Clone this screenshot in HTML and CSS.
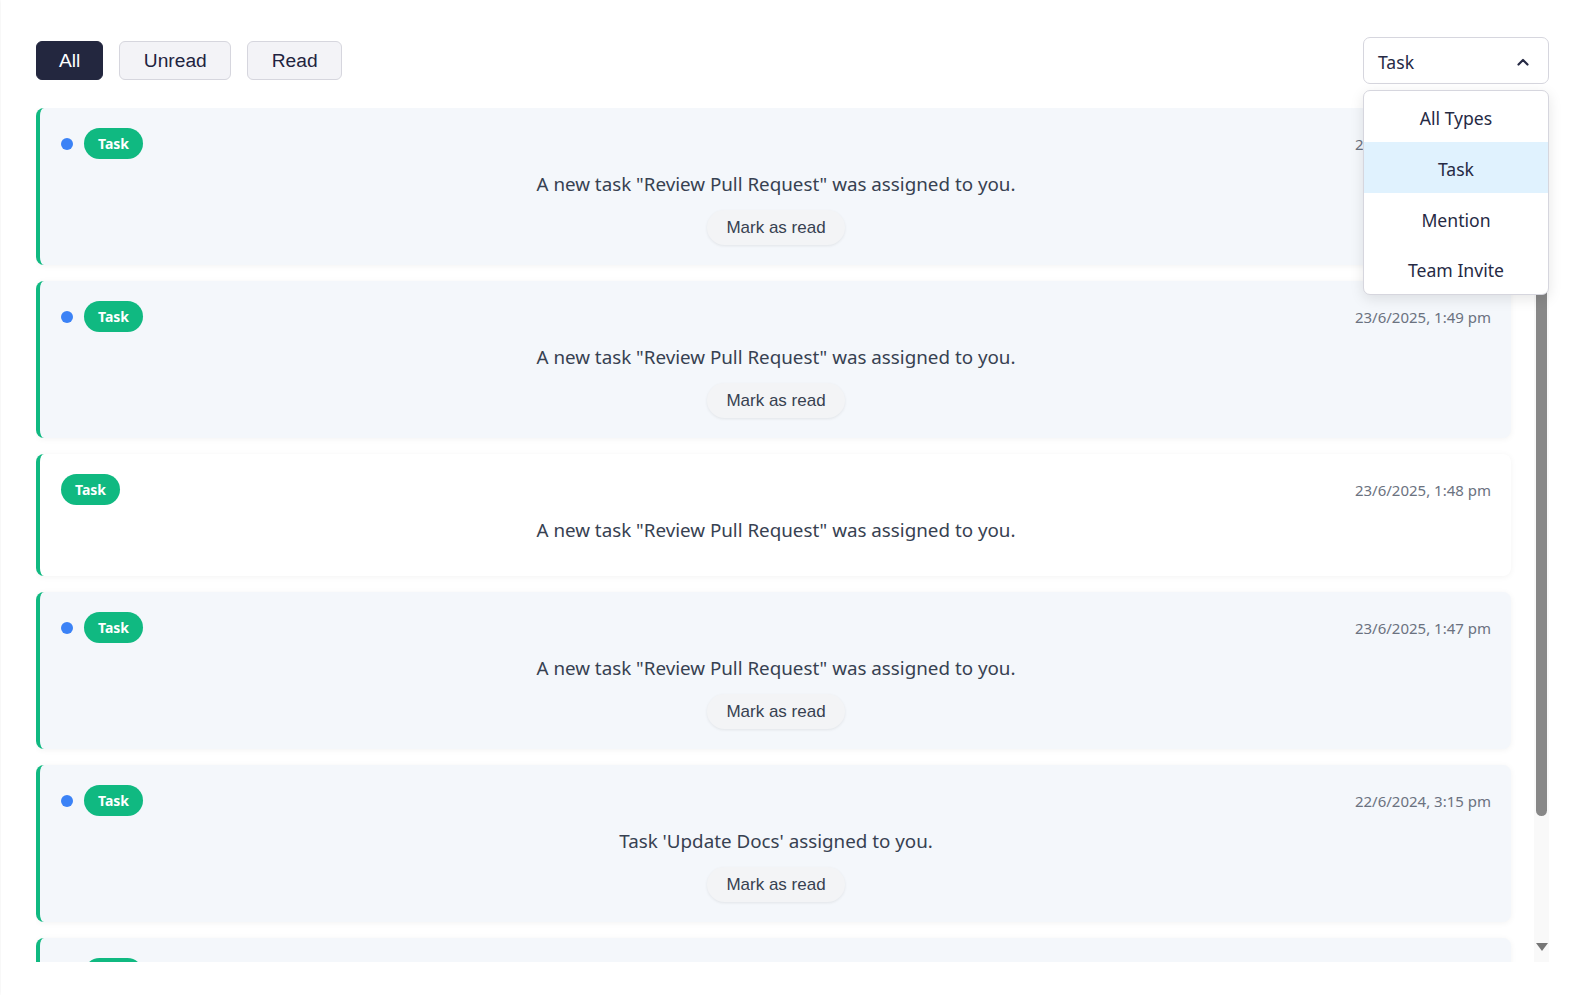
FILE: index.html
```html
<!DOCTYPE html>
<html lang="en">
<head>
<meta charset="utf-8">
<title>Notifications</title>
<link rel="stylesheet" href="styles.css">
</head>
<body>
<div class="page">
  <div class="toolbar">
    <div class="filters">
      <button class="filter-btn active">All</button>
      <button class="filter-btn">Unread</button>
      <button class="filter-btn">Read</button>
    </div>
    <div class="type-select">
      <div class="select-box">
        <span>Task</span>
        <svg class="chevron" width="12" height="8" viewBox="0 0 12 8"><path d="M1.5 6.5 L6 2 L10.5 6.5" fill="none" stroke="#262a44" stroke-width="2.2" stroke-linecap="round" stroke-linejoin="round"/></svg>
      </div>
      <ul class="dropdown">
        <li class="option">All Types</li>
        <li class="option selected">Task</li>
        <li class="option">Mention</li>
        <li class="option">Team Invite</li>
      </ul>
    </div>
  </div>

  <div class="list-wrap">
    <div class="list">
      <div class="card unread">
        <div class="card-head">
          <div class="tags"><span class="dot"></span><span class="badge">Task</span></div>
          <span class="time">23/6/2025, 1:50 pm</span>
        </div>
        <p class="message">A new task "Review Pull Request" was assigned to you.</p>
        <div class="actions"><button class="mark-btn">Mark as read</button></div>
      </div>

      <div class="card unread">
        <div class="card-head">
          <div class="tags"><span class="dot"></span><span class="badge">Task</span></div>
          <span class="time">23/6/2025, 1:49 pm</span>
        </div>
        <p class="message">A new task "Review Pull Request" was assigned to you.</p>
        <div class="actions"><button class="mark-btn">Mark as read</button></div>
      </div>

      <div class="card">
        <div class="card-head">
          <div class="tags"><span class="badge">Task</span></div>
          <span class="time">23/6/2025, 1:48 pm</span>
        </div>
        <p class="message">A new task "Review Pull Request" was assigned to you.</p>
      </div>

      <div class="card unread">
        <div class="card-head">
          <div class="tags"><span class="dot"></span><span class="badge">Task</span></div>
          <span class="time">23/6/2025, 1:47 pm</span>
        </div>
        <p class="message">A new task "Review Pull Request" was assigned to you.</p>
        <div class="actions"><button class="mark-btn">Mark as read</button></div>
      </div>

      <div class="card unread">
        <div class="card-head">
          <div class="tags"><span class="dot"></span><span class="badge">Task</span></div>
          <span class="time">22/6/2024, 3:15 pm</span>
        </div>
        <p class="message">Task 'Update Docs' assigned to you.</p>
        <div class="actions"><button class="mark-btn">Mark as read</button></div>
      </div>

      <div class="card unread">
        <div class="card-head">
          <div class="tags"><span class="dot"></span><span class="badge">Task</span></div>
          <span class="time">21/6/2024, 10:02 am</span>
        </div>
        <p class="message">Task 'Fix Login Bug' assigned to you.</p>
        <div class="actions"><button class="mark-btn">Mark as read</button></div>
      </div>
    </div>

    <div class="scrollbar" aria-hidden="true">
      <div class="scroll-up"></div>
      <div class="scroll-thumb"></div>
      <div class="scroll-down"><span class="arrow-down"></span></div>
    </div>
  </div>
</div>
</body>
</html>
```

FILE: styles.css
```css
* {
  box-sizing: border-box;
}

html, body {
  margin: 0;
  background: #ffffff;
}

body {
  font-family: "Noto Sans", "Open Sans", sans-serif;
  color: #374151;
}

.page {
  min-height: 100vh;
  padding: 37px 28px 0 35px;
  box-shadow: 0 0 4px rgba(0, 0, 0, 0.07);
  margin-left: 1px;
}

.toolbar {
  display: flex;
  justify-content: space-between;
  align-items: center;
  margin-bottom: 24px;
}

.filters {
  display: flex;
  gap: 16px;
}

.filter-btn {
  font-family: "Liberation Sans", Arial, sans-serif;
  font-size: 19.2px;
  padding: 7.5px 23.5px;
  border: 1px solid #d6d6de;
  border-radius: 6px;
  background: #f3f3f7;
  color: #1f2340;
  cursor: pointer;
}

.filter-btn.active {
  background: #23273f;
  border-color: #23273f;
  color: #ffffff;
  padding: 7.5px 22px;
}

.type-select {
  position: relative;
  width: 186px;
}

.select-box {
  display: flex;
  align-items: center;
  justify-content: space-between;
  height: 47px;
  padding: 2px 19px 0 14px;
  border: 1px solid #d6d6de;
  border-radius: 7px;
  background: #ffffff;
  font-size: 17.6px;
  color: #262a44;
}

.dropdown {
  position: absolute;
  top: 53px;
  left: 0;
  right: 0;
  margin: 0;
  padding: 0;
  list-style: none;
  background: #ffffff;
  border: 1px solid #d6d6de;
  border-radius: 7px;
  box-shadow: 0 4px 14px rgba(0, 0, 0, 0.1);
  z-index: 10;
  overflow: hidden;
}

.option {
  text-align: center;
  font-size: 17.6px;
  line-height: 26.4px;
  padding: 14px 16px 10.4px;
  color: #262a44;
}

.option.selected {
  background: #e0f2fe;
}

.list-wrap {
  display: flex;
  height: calc(100vh - 141px);
}

.list {
  flex: 1;
  overflow: hidden;
  padding-right: 23px;
}

.scrollbar {
  width: 15px;
  display: flex;
  flex-direction: column;
  background: #f9f9f9;
}

.scroll-up {
  height: 15px;
}

.scroll-thumb {
  height: 693px;
  margin: 0 2px;
  border-radius: 6px;
  background: #888888;
}

.scroll-down {
  margin-top: auto;
  height: 19px;
  display: flex;
  justify-content: center;
}

.arrow-down {
  width: 0;
  height: 0;
  border-left: 6px solid transparent;
  border-right: 6px solid transparent;
  border-top: 8px solid #767676;
}

.card {
  background: #ffffff;
  border-left: 4px solid #10b981;
  border-radius: 8px;
  padding: 20px 20px 20px 21px;
  margin-bottom: 16px;
  box-shadow: 0 1px 6px rgba(0, 0, 0, 0.05);
}

.card.unread {
  background: #f4f7fb;
}

.card-head {
  display: flex;
  justify-content: space-between;
  align-items: center;
}

.tags {
  display: flex;
  align-items: center;
  gap: 11px;
}

.dot {
  width: 12px;
  height: 12px;
  border-radius: 50%;
  background: #3b82f6;
}

.badge {
  background: #10b981;
  color: #ffffff;
  font-weight: 700;
  font-size: 14px;
  line-height: 21px;
  padding: 5px 14px;
  border-radius: 999px;
}

.time {
  font-size: 15px;
  color: #6b7280;
}

.message {
  margin: 11px 0 12px;
  text-align: center;
  font-size: 18.8px;
  line-height: 28px;
  color: #374151;
}

.actions {
  display: flex;
  justify-content: center;
}

.mark-btn {
  font-family: "Liberation Sans", Arial, sans-serif;
  font-size: 17px;
  padding: 7.5px 19px;
  border: none;
  border-radius: 999px;
  background: #f3f4f6;
  color: #374151;
  box-shadow: 0 1px 3px rgba(0, 0, 0, 0.08);
  cursor: pointer;
}
```
